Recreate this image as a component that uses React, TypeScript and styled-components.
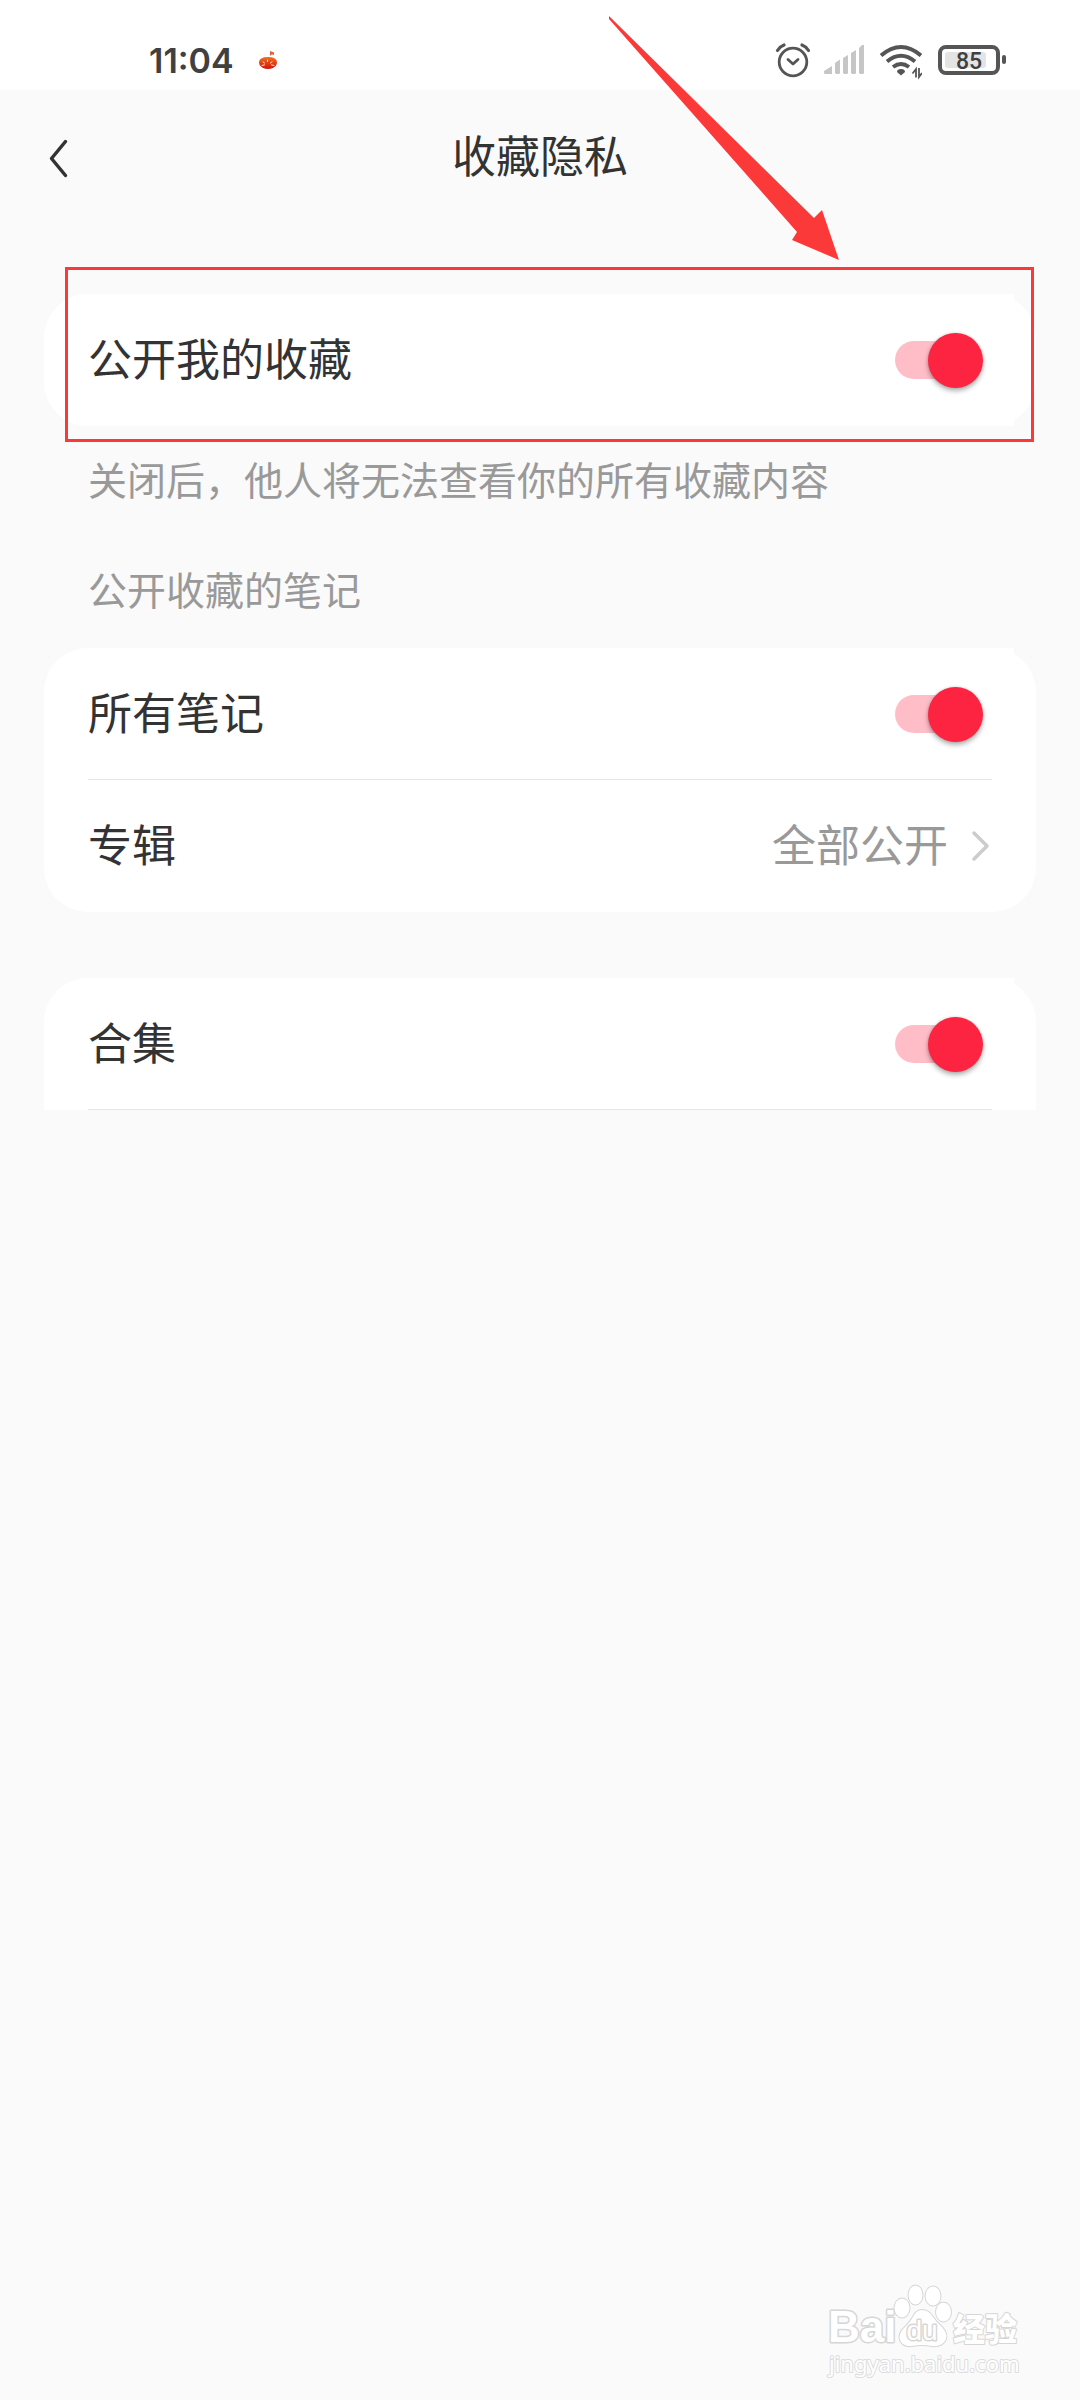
import React from "react";
import styled, { createGlobalStyle } from "styled-components";

const GlobalStyle = createGlobalStyle`
  *, *::before, *::after { box-sizing: border-box; }
  body {
    margin: 0;
    background: #fafafa;
    color: #333333;
    font-family: "Noto Sans CJK SC", "Noto Sans", sans-serif;
  }
  button { font-family: inherit; color: inherit; }
`;

const Page = styled.div`
  display: flex;
  flex-direction: column;
  min-height: 100vh;
`;

const StatusBar = styled.div`
  display: flex;
  align-items: center;
  justify-content: space-between;
  height: 90px;
  padding: 30px 72px 0 149px;
  background: #ffffff;
`;

const StatusGroup = styled.div<{ $gap: number }>`
  display: flex;
  align-items: center;
  gap: ${(p) => p.$gap}px;
`;

const Clock = styled.time`
  font: 600 34px/40px "Inter", "Noto Sans", sans-serif;
  padding-top: 2px;
  color: #404040;
`;

const Header = styled.header`
  display: grid;
  grid-template-columns: 132px 1fr 132px;
  align-items: center;
  height: 132px;
`;

const BackButton = styled.button`
  display: flex;
  align-items: center;
  height: 132px;
  padding: 4px 0 0 48px;
  border: 0;
  background: none;
`;

const Title = styled.h1`
  margin: 0;
  padding-bottom: 4px;
  text-align: center;
  font-size: 44px;
  line-height: 64px;
  font-weight: 400;
`;

const Main = styled.main`
  display: flex;
  flex-direction: column;
  padding: 72px 44px 0;
`;

const Card = styled.section<{ $open?: boolean }>`
  background: #ffffff;
  border-radius: ${(p) => (p.$open ? "44px 44px 0 0" : "44px")};
`;

const Highlighted = styled.div`
  position: relative;
`;

const HighlightFrame = styled.div`
  position: absolute;
  inset: -27px 2px -16px 21px;
  border: 3px solid #fc3939;
  pointer-events: none;
`;

const Arrow = styled.svg`
  position: absolute;
  right: 196px;
  bottom: 166px;
  pointer-events: none;
`;

const SwitchRow = styled.label`
  display: flex;
  align-items: center;
  justify-content: space-between;
  height: 132px;
  margin-right: 22px;
  padding: 0 31px 0 44px;
  background: linear-gradient(#ffffff, #ffffff) no-repeat 44px 0;
`;

const LinkRow = styled.button`
  display: flex;
  align-items: center;
  justify-content: space-between;
  width: 100%;
  height: 132px;
  padding: 0 44px;
  border: 0;
  background: none;
`;

const RowText = styled.span<{ $muted?: boolean }>`
  padding-bottom: 6px;
  color: ${(p) => (p.$muted ? "#999999" : "#333333")};
  font-size: 44px;
  line-height: 64px;
`;

const LinkValue = styled.span`
  display: flex;
  align-items: center;
  gap: 22px;
`;

const Divider = styled.hr`
  height: 1px;
  margin: -1px 44px 0;
  border: 0;
  background: #e6e6e6;
`;

const Switch = styled.input`
  appearance: none;
  display: flex;
  align-items: center;
  justify-content: flex-start;
  width: 88px;
  height: 38px;
  margin: 0;
  border-radius: 19px;
  background: #d9d9d9;
  &::before {
    content: "";
    width: 55px;
    height: 55px;
    flex: none;
    border-radius: 50%;
    background: #ffffff;
    box-shadow: 0 3px 5px rgba(0, 0, 0, 0.3), 0 0 3px rgba(0, 0, 0, 0.14);
  }
  &:checked {
    justify-content: flex-end;
    background: linear-gradient(90deg, #ffbdc7 60px, transparent 60px);
  }
  &:checked::before { background: #fd2442; }
`;

const Note = styled.p`
  margin: 25px 44px 0;
  color: #999999;
  font-size: 39px;
  line-height: 54px;
`;

const GroupTitle = styled.h2`
  margin: 56px 44px 33px;
  color: #999999;
  font-size: 39px;
  line-height: 54px;
  font-weight: 400;
`;

const Spacer = styled.div`
  height: 66px;
`;

const Watermark = styled.footer`
  display: flex;
  justify-content: flex-end;
  margin-top: auto;
  padding: 0 50px 20px 0;
`;

function FlagIcon() {
  return (
    <svg width="20" height="20" viewBox="0 0 20 20" aria-hidden="true">
      <defs>
        <linearGradient id="gem" x1="0" y1="0" x2="0" y2="1">
          <stop offset="0" stopColor="#f07020" />
          <stop offset="1" stopColor="#d41208" />
        </linearGradient>
      </defs>
      <path d="M12 1l4 1.500v3l-1-1-2 .3v.7h-1z" fill="#e2603a" />
      <path d="M1 12.500q0-5.500 9-5.500t9 5.500q0 3-4 5.500-5 2-10 0-4-2.500-4-5.500z" fill="url(#gem)" />
      <path d="M4 15.500l2.500-.6M5 12l1.500 1M9.500 10v1.500M14 12l-1.500 1M16 15.500l-2.500-.6" stroke="#ffe9dd" strokeWidth="1" strokeLinecap="round" />
    </svg>
  );
}

function AlarmIcon() {
  return (
    <svg width="36" height="40" viewBox="0 0 36 40" fill="none" stroke="#555555" strokeLinecap="round" strokeLinejoin="round" aria-hidden="true">
      <circle cx="19" cy="22" r="13.800" strokeWidth="2.800" />
      <path d="M14 19.500l5 4.500 5-4.500" strokeWidth="2.800" />
      <path d="M3.500 10.500Q6 6.500 10 5M34.500 10.500Q32 6.500 28 5" strokeWidth="3.200" />
    </svg>
  );
}

function SignalIcon() {
  return (
    <svg width="40" height="40" viewBox="0 0 40 40" fill="#c6c6c6" aria-hidden="true">
      <path d="M0 31l8-5v8H1.500Q0 34 0 32.500zM11 23l5-3.500V33l-1 1h-3l-1-1zM19 18l5-3v18l-1 1h-3l-1-1zM27 13l5-3v23l-1 1h-3l-1-1zM35 8l3-3h2v28l-1 1h-3l-1-1z" />
    </svg>
  );
}

function WifiIcon() {
  return (
    <svg width="44" height="40" viewBox="0 0 44 40" fill="none" stroke="#555555" aria-hidden="true">
      <path d="M3 15.500Q23 -1.500 43 15.500M9 21.500Q23 10 37 21.500M15 27Q23 21 31 27" strokeWidth="4" />
      <path d="M19 32q0-3 4-3t4 3l-4 3.500z" fill="#555555" stroke="none" />
      <path d="M38 37.500V29l-3.500 4.500M41 28v9l3-4" strokeWidth="1.800" />
    </svg>
  );
}

function BatteryIcon() {
  return (
    <svg width="72" height="40" viewBox="0 0 72 40" role="img" aria-label="85%">
      <rect x="4" y="7" width="58" height="26" rx="6" fill="none" stroke="#555555" strokeWidth="4" />
      <rect x="9" y="12" width="41" height="16" rx="3" fill="#e4e4e4" />
      <rect x="66" y="15" width="4" height="9" rx="2" fill="#555555" />
      <text x="33" y="29" textAnchor="middle" fontFamily="Roboto, sans-serif" fontWeight="500" fontSize="23" fill="#404040">85</text>
    </svg>
  );
}

function BaiduLogo() {
  return (
    <svg width="206" height="104" viewBox="0 0 206 104" fill="#ffffff" stroke="#d6d6d6" strokeLinejoin="round" paintOrder="stroke" role="img" aria-label="Baidu 经验">
      <text x="4" y="66" fontFamily="Liberation Sans, sans-serif" fontWeight="700" fontSize="44" strokeWidth="3">Bai</text>
      <g strokeWidth="2">
        <ellipse cx="78" cy="32" rx="7.500" ry="9.500" />
        <ellipse cx="91.500" cy="19" rx="7" ry="9.500" />
        <ellipse cx="109" cy="20" rx="7.500" ry="9.500" />
        <ellipse cx="119.500" cy="36" rx="7.500" ry="9.500" />
        <path d="M98 34q7 0 11 7 3 5 9 10 7 8 3 14-4 6-13 5-10-2-20 0-9 1-12-6-2-7 5-13 5-5 8-10 3-7 9-7z" />
      </g>
      <text x="98" y="64" textAnchor="middle" fontFamily="Liberation Sans, sans-serif" fontSize="28" strokeWidth="3">du</text>
      <text x="129" y="65" fontFamily="Noto Sans CJK SC, sans-serif" fontWeight="900" fontSize="32" strokeWidth="2">经验</text>
      <text x="5" y="96" fontFamily="Noto Sans, sans-serif" fontSize="22" stroke="#dddddd" strokeWidth="2">jingyan.baidu.com</text>
    </svg>
  );
}

function ToggleItem({ label }: { label: string }) {
  return (
    <SwitchRow>
      <RowText>{label}</RowText>
      <Switch type="checkbox" role="switch" defaultChecked />
    </SwitchRow>
  );
}

export default function App() {
  return (
    <Page>
      <GlobalStyle />
      <StatusBar>
        <StatusGroup $gap={24}>
          <Clock>11:04</Clock>
          <FlagIcon />
        </StatusGroup>
        <StatusGroup $gap={14}>
          <AlarmIcon />
          <SignalIcon />
          <WifiIcon />
          <BatteryIcon />
        </StatusGroup>
      </StatusBar>
      <Header>
        <BackButton aria-label="返回">
          <svg width="24" height="40" viewBox="0 0 24 40" fill="none" stroke="#333333" strokeWidth="3.500" strokeLinecap="round" strokeLinejoin="round" aria-hidden="true">
            <path d="M17.500 3.500L3.500 20.500l14 17" />
          </svg>
        </BackButton>
        <Title>收藏隐私</Title>
      </Header>
      <Main>
        <Highlighted>
          <Card>
            <ToggleItem label="公开我的收藏" />
          </Card>
          <HighlightFrame />
          <Arrow width="232" height="245" viewBox="608 15 232 245" fill="#fc3939" aria-hidden="true">
            <path d="M609 16L814 218l8-8 17 50-47-20 5-8L609 19z" />
          </Arrow>
        </Highlighted>
        <Note>关闭后，他人将无法查看你的所有收藏内容</Note>
        <GroupTitle>公开收藏的笔记</GroupTitle>
        <Card>
          <ToggleItem label="所有笔记" />
          <Divider />
          <LinkRow>
            <RowText>专辑</RowText>
            <LinkValue>
              <RowText $muted>全部公开</RowText>
              <svg width="22" height="32" viewBox="0 0 22 32" fill="none" stroke="#cccccc" strokeWidth="3.500" strokeLinecap="round" strokeLinejoin="round" aria-hidden="true">
                <path d="M4 3l13 13L4 29" />
              </svg>
            </LinkValue>
          </LinkRow>
        </Card>
        <Spacer />
        <Card $open>
          <ToggleItem label="合集" />
          <Divider />
        </Card>
      </Main>
      <Watermark>
        <BaiduLogo />
      </Watermark>
    </Page>
  );
}
